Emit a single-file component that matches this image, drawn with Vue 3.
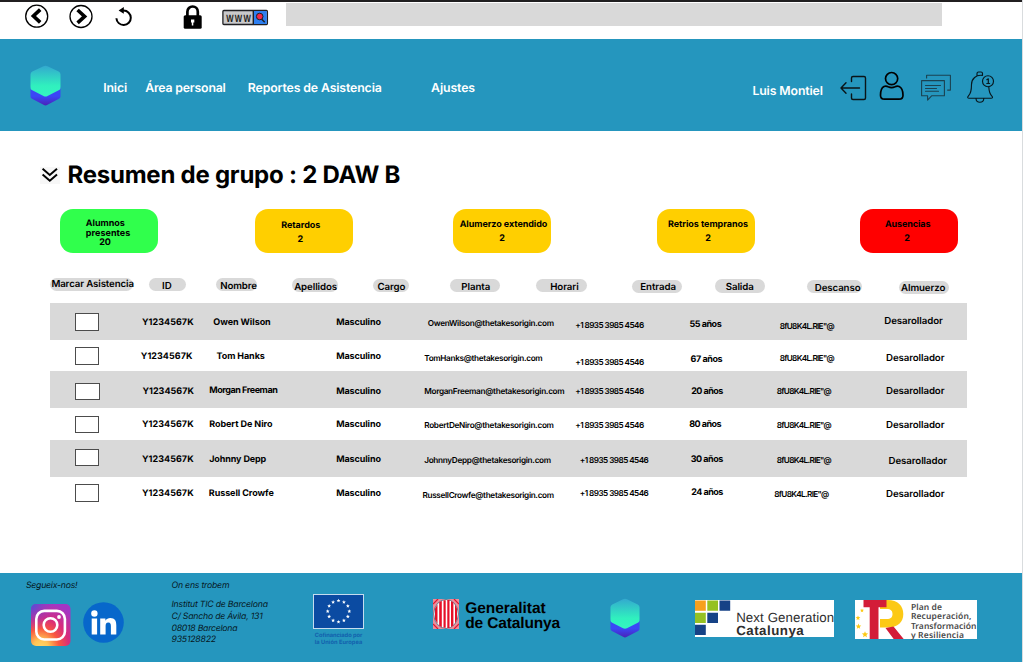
<script setup>
// Spreads the letters of a label so that it fills the given width in pixels.
const vFit = {
  mounted(el, { value }) {
    const natural = el.getBoundingClientRect().width
    const count = el.textContent.length
    if (count > 1) el.style.letterSpacing = (value - natural) / (count - 1) + 'px'
    el.style.width = value + 'px'
  },
}

const cards = [
  { tone: 'green', gap: 0, lines: [['Alumnos', 25.8, 9.9, 39], ['presentes', 25.8, 0, 44.5], ['20', 39.3, 0, 11.5]] },
  { tone: 'yellow', gap: 97.4, lines: [['Retardos', 25.8, 11, 39.2], ['2', 42, 3, 6]] },
  { tone: 'yellow', gap: 99.8, lines: [['Alumerzo extendido', 6.5, 10.4, 87.7], ['2', 46, 3, 6]] },
  { tone: 'yellow', gap: 105.7, lines: [['Retrios tempranos', 11, 10.4, 80.2], ['2', 48.3, 3, 6]] },
  { tone: 'red', gap: 105.3, lines: [['Ausencias', 24.8, 10.4, 45.5], ['2', 44, 3, 6]] },
]

// label, pill left, pill top, pill width, text inset, text centre, text width
const heads = [
  ['Marcar Asistencia', 49.7, 278, 83.5, 1.7, 285, 82.6],
  ['ID', 149.4, 278, 37, 12.5, 286.7, 9.8],
  ['Nombre', 216.5, 278, 41, 3.7, 286.7, 36.8],
  ['Apellidos', 292.5, 278.5, 46, 1.7, 287.8, 43],
  ['Cargo', 373, 279, 36.5, 4.5, 287.8, 28],
  ['Planta', 450, 279, 50.5, 11.2, 288.4, 29.2],
  ['Horari', 536.2, 279, 50.5, 14, 287.8, 28.6],
  ['Entrada', 632, 280, 50, 8.2, 288.5, 36],
  ['Salida', 715, 279.5, 50, 10.8, 288.5, 28],
  ['Descanso', 807, 280, 55.3, 7.8, 288.7, 45.8],
  ['Almuerzo', 899.5, 281, 49.5, 1.6, 288.6, 44.3],
].map(([label, x, top, width, inset, mid, fit], i, all) => ({
  label,
  fit,
  style: {
    marginLeft: x - (i ? all[i - 1][1] + all[i - 1][3] : 0) + 'px',
    marginTop: top - 270 + 'px',
    width: width + 'px',
    paddingLeft: inset + 'px',
    paddingTop: mid - top - 6 + 'px',
  },
}))

// Left edge of each column; the last value closes the table
const columns = [50, 135, 200, 330, 418, 570, 680, 765, 875, 967]
const ID = 'Y1234567K'
const PHONE = '+1 8935 3985 4546'
const KEY = '8fU8K4L.RIE"@'
const JOB = 'Desarollador'
const rows = [
  { top: 303, bottom: 340, box: [75, 313, 24, 18], cells: [[ID, 142, 321.8, 51.6], ['Owen Wilson', 213.3, 321.8, 57.4], ['Masculino', 336.2, 321.8, 44.8], ['OwenWilson@thetakesorigin.com', 427.7, 323.6, 126.4], [PHONE, 575.2, 325.5, 69], ['55 años', 689.5, 323.8, 32.2], [KEY, 779.7, 325.8, 55], [JOB, 884.3, 321.4, 58.5]] },
  { top: 340, bottom: 371.3, box: [75, 347, 24, 18], cells: [[ID, 140.8, 356, 51.6], ['Tom Hanks', 216.6, 356, 48.2], ['Masculino', 336.2, 356, 44.8], ['TomHanks@thetakesorigin.com', 424.2, 358, 118.5], [PHONE, 575.2, 362.2, 69], ['67 años', 690.6, 358.8, 32], [KEY, 779.7, 357.7, 55], [JOB, 886, 357.8, 58.5]] },
  { top: 371.3, bottom: 408, box: [75, 382.7, 25, 17], cells: [[ID, 142.4, 390.7, 51.6], ['Morgan Freeman', 209.2, 390.4, 68.6], ['Masculino', 336.2, 390.7, 44.8], ['MorganFreeman@thetakesorigin.com', 424.2, 391.7, 140.5], [PHONE, 575.2, 391.2, 69], ['20 años', 691.2, 390.9, 32.2], [KEY, 776.8, 391.2, 55], [JOB, 886, 391, 58.5]] },
  { top: 408, bottom: 440, box: [75, 416, 24, 17], cells: [[ID, 142, 423.7, 51.6], ['Robert De Niro', 209.2, 424, 63.3], ['Masculino', 336.2, 423.7, 44.8], ['RobertDeNiro@thetakesorigin.com', 424.2, 425.8, 129.8], [PHONE, 575.2, 425, 69], ['80 años', 689.2, 424.4, 32.4], [KEY, 776.8, 425.5, 55], [JOB, 886, 425.2, 58.5]] },
  { top: 440, bottom: 476.7, box: [75, 449, 24, 17], cells: [[ID, 142, 459, 51.6], ['Johnny Depp', 209.2, 459, 57.1], ['Masculino', 336.2, 459, 44.8], ['JohnnyDepp@thetakesorigin.com', 424.2, 460.8, 127], [PHONE, 579.8, 460.4, 69], ['30 años', 690.8, 459.3, 32.4], [KEY, 776.8, 460.4, 55], [JOB, 888.6, 461.4, 58.5]] },
  { top: 476.7, bottom: 510, box: [75, 484, 24, 18], cells: [[ID, 142, 492.9, 51.6], ['Russell Crowfe', 208.8, 492.9, 65], ['Masculino', 336.2, 492.9, 44.8], ['RussellCrowfe@thetakesorigin.com', 422.5, 495.4, 131.6], [PHONE, 579.8, 492.8, 69], ['24 años', 691.2, 491.8, 32.2], [KEY, 774.3, 494.3, 55], [JOB, 886, 494.4, 58.5]] },
]
const kinds = ['bold', 'bold', 'bold', 'mail', 'phone', 'bold', 'key', 'job']
const lift = { bold: 5.1, job: 5.1, mail: 6.3, phone: 6.2, key: 6 }
const rowStyle = (row) => ({
  height: row.bottom - row.top + 'px',
  gridTemplateColumns: columns.slice(1).map((c, i) => c - columns[i] + 'px').join(' '),
})
const boxStyle = (row) => ({
  marginLeft: row.box[0] - columns[0] + 'px',
  marginTop: row.box[1] - row.top + 'px',
  width: row.box[2] + 'px',
  height: row.box[3] + 'px',
})
const cellStyle = (row, cell, i) => ({
  paddingLeft: cell[1] - columns[i + 1] + 'px',
  paddingTop: cell[2] - row.top - lift[kinds[i]] + 'px',
})

const stars = Array.from({ length: 12 }, (_, i) => {
  const a = (i * Math.PI) / 6
  return { x: 25.5 + 10.8 * Math.sin(a), y: 17.3 - 10.6 * Math.cos(a) }
})
const starPoints = (cx, cy, r) =>
  Array.from({ length: 10 }, (_, i) => {
    const a = (i * Math.PI) / 5
    const d = i % 2 ? r * 0.45 : r
    return (cx + d * Math.sin(a)).toFixed(2) + ',' + (cy - d * Math.cos(a)).toFixed(2)
  }).join(' ')
</script>

<template>
  <div class="page">
    <div class="browser">
      <svg class="tools" width="285" height="37" viewBox="0 2 285 37">
        <g fill="none" stroke="#000">
          <circle cx="36.7" cy="16.2" r="11" stroke-width="1.3" />
          <path d="M40.2 9.6 33.4 16l6.8 6.400" stroke-width="3.600" />
          <circle cx="81" cy="16.5" r="11" stroke-width="1.3" />
          <path d="M77.600 10 84.600 16.400l-7 6.400" stroke-width="3.600" />
          <path d="M116.4 18.2a7.2 7.2 0 1 0 7.2-7.6h-2" stroke-width="2" />
          <path d="M187.4 16v-4.300a5.200 5.200 0 0 1 10.400 0V16" stroke-width="2.700" />
        </g>
        <path d="M123.800 7v6.800l-5.200-3.400z" />
        <rect x="183.700" y="15.200" width="18" height="13.600" rx="1.600" />
        <path d="M191 19.500h3.300v3h-1v3h-1.500v-3H191z" fill="#fff" />
        <rect x="222.900" y="10.500" width="44.500" height="14" rx="1" fill="#c9c9cb" stroke="#1f1f22" stroke-width="1.300" />
        <path d="M253.300 11.100h13.500v12.800h-13.500z" fill="#2d7ff0" />
        <path d="M253.300 10.500v14M261.300 18.800l3.400 3.400" stroke="#1f1f22" stroke-width="1.400" />
        <circle cx="259.700" cy="16.500" r="3.300" fill="#f0284c" stroke="#1f1f22" stroke-width="1" />
        <text x="226.200" y="21.500" class="www" textLength="26" lengthAdjust="spacingAndGlyphs">WWW</text>
      </svg>
      <div class="url"></div>
    </div>

    <header class="header">
      <svg class="brand" width="31" height="41" viewBox="0 0 31 41">
        <defs>
          <linearGradient id="top" x1="0" y1="0" x2="0" y2="1">
            <stop offset="0" stop-color="#33a9cf" /><stop offset=".65" stop-color="#30f0be" /><stop offset="1" stop-color="#34f5c0" />
          </linearGradient>
          <linearGradient id="base" x1="0" y1="0" x2="0" y2="1">
            <stop offset=".5" stop-color="#3b46f6" /><stop offset="1" stop-color="#4a22b8" />
          </linearGradient>
        </defs>
        <path d="M.5 22h30v9.500q0 1.500-1.500 2.300L17.500 39.800q-2 1.200-4 0L2 33.800Q.5 33 .5 31.500z" fill="url(#base)" />
        <path d="M13.500 1.200q2-1 4 0L28.700 6.600q1.800 1 1.800 3v13.500q0 1.300-1.300 2L17.500 30.900q-2 1-4 0L1.800 25.100q-1.300-.7-1.300-2V9.600q0-2 1.800-3z" fill="url(#top)" />
      </svg>
      <nav class="nav">
        <a v-fit="24" class="inici">Inici</a>
        <a v-fit="80.600" class="area">Área personal</a>
        <a v-fit="134" class="reports">Reportes de Asistencia</a>
        <a v-fit="44" class="settings">Ajustes</a>
      </nav>
      <span v-fit="70.600" class="user">Luis Montiel</span>
      <svg class="actions" width="160" height="40" viewBox="838 68 160 40" fill="none" stroke="#0a1418" stroke-linecap="round" stroke-linejoin="round">
        <path d="M851.500 81.500v-3.500q0-1.500 1.500-1.500h11q1.500 0 1.500 1.500v20q0 1.500-1.500 1.500h-11q-1.500 0-1.500-1.500v-4M859.500 88h-18.300M846 82.700 841 88l5 5.300" stroke-width="1.400" />
        <g stroke="#000" stroke-width="1.700">
          <circle cx="891.600" cy="78.600" r="6.100" />
          <path d="M884 86.500q2-1 4.200.3 3.400 1.800 6.800 0 2.200-1.300 4.200-.3c2.600 1.300 3.800 5.500 3.800 8.700q0 4-4 4h-14.500q-4 0-4-4c0-3.200 1-7.400 3.500-8.700z" />
        </g>
        <g stroke="#1b4251" stroke-width="1.100">
          <path d="M926.600 78v-2.700h23.800v14.800h-2.800M921.600 80.600h22.800v15.200h-12.800l-4 4.300v-4.300h-6zM925.500 85.500h15M925.500 88.500h11M925.500 91.300h13" />
        </g>
        <g stroke="#07181f" stroke-width="1.150">
          <path d="M977 75.500v-2q0-1.500 1.500-1.500h2.500q1.500 0 1.500 1.500v1M982.500 75.400c-6.500-1-11 3.600-11 9.200 0 5.500-.5 9-3 11.200-1.500 1.500-.8 2.500.7 2.500h21.800c1.500 0 2.200-1 .7-2.500-2-2-2.700-5-2.900-8.800M976 98.500c.3 5 7.500 5 7.800 0" />
          <circle cx="988" cy="81.200" r="5.500" />
          <path d="M986.800 79.700l1.500-.9v4.700M986.800 83.500h2.800" stroke-width="1.200" />
        </g>
      </svg>
    </header>

    <main class="main">
      <h1 class="title">
        <svg width="20" height="17" viewBox="0 0 20 17">
          <path d="M0 0h20v17H0z" fill="#f7f7f7" />
          <path d="m2.600 1.800 7.200 6.200 7.200-6.200M2.600 7.500l7.200 6.200 7.200-6.200" fill="none" stroke="#000" stroke-width="2" />
        </svg>
        <span v-fit="333">Resumen de grupo : 2 DAW B</span>
      </h1>

      <section class="cards">
        <div v-for="(card, c) in cards" :key="c" class="card" :class="card.tone" :style="{ marginLeft: card.gap + 'px' }">
          <div v-for="line in card.lines" :key="line[0]" class="line" :style="{ paddingLeft: line[1] + 'px', paddingTop: line[2] + 'px' }">
            <span v-fit="line[3]">{{ line[0] }}</span>
          </div>
        </div>
      </section>

      <section class="heads">
        <div v-for="head in heads" :key="head.label" class="pill" :style="head.style">
          <span v-fit="head.fit">{{ head.label }}</span>
        </div>
      </section>

      <section class="rows">
        <div v-for="(row, r) in rows" :key="r" class="row" :style="rowStyle(row)">
          <div class="check" :style="boxStyle(row)"></div>
          <div v-for="(cell, i) in row.cells" :key="i" class="cell" :class="kinds[i]" :style="cellStyle(row, cell, i)">
            <span v-fit="cell[3]">{{ cell[0] }}</span>
          </div>
        </div>
      </section>
    </main>

    <footer class="footer">
      <div class="social">
        <span v-fit="51.500" class="small">Segueix-nos!</span>
        <div class="networks">
          <svg width="40" height="42" viewBox="0 0 40 42">
            <defs>
              <radialGradient id="insta" cx=".25" cy="1.050" r="1.100">
                <stop offset="0" stop-color="#ffd76a" /><stop offset=".18" stop-color="#ffc455" /><stop offset=".42" stop-color="#f9573f" /><stop offset=".65" stop-color="#d92d7a" /><stop offset="1" stop-color="#a435c4" />
              </radialGradient>
              <radialGradient id="violet" cx="0" cy="0" r=".65">
                <stop offset="0" stop-color="#4a50d8" /><stop offset="1" stop-color="#a435c4" stop-opacity="0" />
              </radialGradient>
            </defs>
            <rect width="39.500" height="42" rx="5" fill="url(#insta)" />
            <rect width="39.500" height="42" rx="5" fill="url(#violet)" />
            <g fill="none" stroke="#fff" stroke-width="2.600">
              <rect x="5.300" y="6.900" width="28.600" height="28.600" rx="8" />
              <circle cx="19.500" cy="21" r="6.800" />
            </g>
            <circle cx="28" cy="13" r="1.900" fill="#fff" />
          </svg>
          <svg width="41" height="41" viewBox="0 0 41 41">
            <circle cx="20.500" cy="20.500" r="20.300" fill="#0767cb" />
            <g fill="#fff">
              <circle cx="11.400" cy="11.500" r="3.200" />
              <path d="M8.700 16.500h5.400v16H8.700zM17.200 16.500h5.200v2.200c1-1.700 2.800-2.600 4.900-2.600 4.700 0 6 3 6 7.300v9.100h-5.400v-8.200c0-2-.3-3.800-2.600-3.800-2.200 0-2.700 1.700-2.700 3.700v8.300h-5.400z" />
            </g>
          </svg>
        </div>
      </div>

      <address class="address small">
        <span v-fit="58" class="where">On ens trobem</span>
        <span v-fit="96.500">Institut TIC de Barcelona</span>
        <span v-fit="91.200">C/ Sancho de Ávila, 131</span>
        <span v-fit="66">08018 Barcelona</span>
        <span v-fit="44.600">935128822</span>
      </address>

      <div class="europe">
        <svg width="51" height="35" viewBox="0 0 51 35">
          <rect x=".5" y=".5" width="50" height="34" fill="#0b4ba2" stroke="#c5dcee" />
          <polygon v-for="(s, i) in stars" :key="i" :points="starPoints(s.x, s.y, 2)" fill="#fff" />
        </svg>
        <span v-fit="47.500">Cofinanciado por</span>
        <span v-fit="47.500">la Unión Europea</span>
      </div>

      <div class="generalitat">
        <svg width="26" height="30" viewBox="0 0 26 30">
          <path d="M0 0h26v30H0z" fill="#ee8d9a" />
          <path d="M0 5 5 0M21 0l5 5M0 25l5 5M21 30l5-5" stroke="#e3142d" stroke-width="1.200" />
          <ellipse cx="13" cy="15" rx="12.300" ry="14.500" fill="#fff" stroke="#3b6580" stroke-width=".8" />
          <path d="M2 9.500 4.500 5.500v19L2 20.500zM6.200 3.200 8.800 1.800v26.400L6.200 26.800zM10.500 1.200h2.200v27.600h-2.200zM14.300 1h2.200v28h-2.200zM18 2l2.400 1.500v23L18 28zM22 5.500l2 4v11l-2 4z" fill="#e60f28" />
        </svg>
        <div class="words">
          <span v-fit="80.500">Generalitat</span>
          <span v-fit="95">de Catalunya</span>
        </div>
      </div>

      <svg class="brand-small" width="30" height="40" viewBox="0 0 31 41" preserveAspectRatio="none">
        <path d="M.5 22h30v9.500q0 1.500-1.500 2.300L17.500 39.800q-2 1.200-4 0L2 33.800Q.5 33 .5 31.500z" fill="url(#base)" />
        <path d="M13.500 1.200q2-1 4 0L28.700 6.600q1.800 1 1.800 3v13.500q0 1.300-1.300 2L17.500 30.900q-2 1-4 0L1.800 25.100q-1.300-.7-1.300-2V9.600q0-2 1.800-3z" fill="url(#top)" />
      </svg>

      <div class="nextgen">
        <svg width="36" height="37" viewBox="0 0 36 37">
          <path d="M0 .5h10.800v10.300H0z" fill="#f6a01e" />
          <path d="M12.300.5H23v10.300H12.300zM0 12.700h10.800V23H0z" fill="#95c123" />
          <path d="M24.500.5h10.700v10.300H24.500zM12.300 12.700H23V23H12.300zM0 24.800h10.800v10.300H0z" fill="#164286" />
        </svg>
        <div class="words">
          <span v-fit="98" class="light">Next Generation</span>
          <span v-fit="67.500">Catalunya</span>
        </div>
      </div>

      <div class="plan">
        <svg width="52" height="39" viewBox="0 0 52 39">
          <path d="M25 0h7.500C43 0 48.300 6 48.300 14S43 27.500 33 27.500h-8V19h6.500c4.500 0 6-2 6-5s-1.500-5-6-5H25z" fill="#fcc915" />
          <path d="M8.500 0h23v7.300h-8V39h-8.800V7.300H8.500zM30.500 28l8-1.500L48.700 39h-10z" fill="#d31c38" />
          <g fill="#fcc915">
            <polygon :points="starPoints(7, 10.500, 2.100)" />
            <polygon :points="starPoints(3, 18, 2.500)" />
            <polygon :points="starPoints(3.500, 26.500, 2.900)" />
            <polygon :points="starPoints(10, 34.500, 3.300)" />
          </g>
        </svg>
        <div class="words">
          <span v-fit="31">Plan de</span>
          <span v-fit="60.500">Recuperación,</span>
          <span v-fit="65.500">Transformación</span>
          <span v-fit="53">y Resiliencia</span>
        </div>
      </div>
    </footer>
  </div>
</template>

<style>
body {
  overflow: hidden;
  background: #fff;
}
</style>

<style scoped>
.page {
  box-sizing: border-box;
  width: 1023px;
  height: 662px;
  display: flex;
  flex-direction: column;
  border-right: 1px solid #d9dcde;
  background: #fff;
  color: #000;
  font-family: Inter, "Liberation Sans", sans-serif;
  text-rendering: geometricPrecision;
  overflow: hidden;
}
svg {
  display: block;
  flex: none;
}
span,
a {
  display: inline-block;
  white-space: nowrap;
  flex: none;
}
.browser {
  box-sizing: border-box;
  height: 39.300px;
  flex: none;
  display: flex;
  border-top: 2px solid #211f20;
}
.www {
  font: 700 10.500px "Liberation Sans", sans-serif;
  letter-spacing: 1.800px;
  fill: #1f1f22;
}
.url {
  margin: 1.300px 0 0 0.600px;
  width: 656.500px;
  height: 23px;
  background: #d9d9d9;
}
.header {
  height: 91.500px;
  flex: none;
  display: flex;
  align-items: flex-start;
  background: #2596be;
  color: #fff;
  font-size: 12.300px;
  line-height: 16px;
  font-weight: 600;
}
.brand {
  margin: 25.700px 0 0 30.400px;
}
.nav {
  display: flex;
  width: 691px;
  padding-top: 40.700px;
}
.inici {
  margin-left: 41.800px;
}
.area {
  margin-left: 18px;
}
.reports {
  margin-left: 22px;
}
.settings {
  margin-left: 49.300px;
}
.user {
  margin-top: 43.400px;
}
.actions {
  margin: 28.700px 0 0 15.500px;
}
.main {
  height: 442.200px;
  flex: none;
}
.title {
  margin: 0;
  height: 78.200px;
  display: flex;
  align-items: flex-start;
  font-size: 24px;
  line-height: 30px;
  font-weight: 700;
}
.title svg {
  margin: 36px 0 0 40px;
}
.title span {
  margin: 29.700px 0 0 7.500px;
}
.cards {
  display: flex;
  height: 61px;
  padding-left: 60px;
}
.card {
  box-sizing: border-box;
  width: 98px;
  height: 44px;
  border-radius: 13px;
  font-size: 9px;
  font-weight: 700;
  line-height: 11px;
  flex: none;
}
.line {
  display: flex;
  line-height: 11px;
}
.green .line:first-child {
  line-height: 10px;
}
.green .line:nth-child(2) {
  line-height: 10.500px;
}
.green .line:nth-child(3) {
  line-height: 8.500px;
}
.green {
  background: #30ff4c;
}
.yellow {
  background: #ffcf00;
}
.red {
  background: #ff0000;
}
.heads {
  display: flex;
  align-items: flex-start;
  height: 33px;
}
.pill {
  box-sizing: border-box;
  height: 13.300px;
  flex: none;
  border-radius: 7px;
  background: #d9d9d9;
  font-size: 9.700px;
  line-height: 12px;
  font-weight: 600;
}
.pill span,
.cell span {
  display: block;
}
.pill span {
  width: max-content;
}
.rows {
  width: 917px;
  margin-left: 50px;
}
.row {
  display: grid;
  align-items: start;
}
.row:nth-child(odd) {
  background: #d9d9d9;
}
.check {
  box-sizing: border-box;
  border: 1px solid #4c4c4c;
  background: #fff;
}
.cell {
  font-size: 9px;
  font-weight: 700;
  line-height: 12px;
}
.cell span {
  width: max-content;
}
.mail {
  font-size: 8.200px;
  font-weight: 600;
}
.phone {
  font-size: 8.200px;
  font-weight: 600;
}
.key {
  font-size: 8.200px;
  font-weight: 600;
}
.job {
  font-size: 9.700px;
  font-weight: 600;
}
.footer {
  flex: 1;
  display: flex;
  align-items: flex-start;
  background: #2596be;
}
.small {
  font-size: 8.700px;
  font-style: italic;
  line-height: 11.800px;
  color: #06181f;
}
.social {
  width: 145.500px;
  padding: 8.200px 0 0 26px;
  line-height: 0;
}
.networks {
  display: flex;
  gap: 11.500px;
  padding: 11px 0 0 5.300px;
}
.networks svg:last-child {
  margin-top: -2px;
}
.address {
  width: 141.500px;
  padding-top: 8.200px;
  display: flex;
  flex-direction: column;
  align-items: flex-start;
}
.where {
  margin-bottom: 7px;
}
.europe {
  width: 51px;
  padding-top: 21px;
  display: flex;
  flex-direction: column;
  align-items: center;
  font-size: 5.700px;
  line-height: 6.700px;
  font-weight: 700;
  color: #1260ad;
}
.europe svg {
  margin-bottom: 4px;
}
.generalitat {
  display: flex;
  margin: 26.500px 0 0 68.500px;
}
.generalitat .words {
  display: flex;
  flex-direction: column;
  align-items: flex-start;
  margin: 1.200px 0 0 6.700px;
  font: 700 15.500px/15.800px "Liberation Sans", sans-serif;
}
.brand-small {
  margin: 25.500px 0 0 50px;
}
.nextgen {
  display: flex;
  margin: 27.200px 0 0 55px;
  width: 139px;
  height: 37px;
  background: #fff;
}
.nextgen .words {
  display: flex;
  flex-direction: column;
  align-items: flex-start;
  margin: 12px 0 0 5px;
  font: 700 13.300px/12.700px "Liberation Sans", sans-serif;
  color: #2e2e2e;
}
.nextgen .light {
  font-weight: 400;
}
.plan {
  display: flex;
  margin: 27.500px 0 0 20.500px;
  width: 122px;
  height: 39px;
  background: #fff;
}
.plan .words {
  display: flex;
  flex-direction: column;
  align-items: flex-start;
  margin: 2.600px 0 0 4.200px;
  font: 600 8.500px/9.400px "Noto Sans", sans-serif;
  color: #484848;
}
</style>
